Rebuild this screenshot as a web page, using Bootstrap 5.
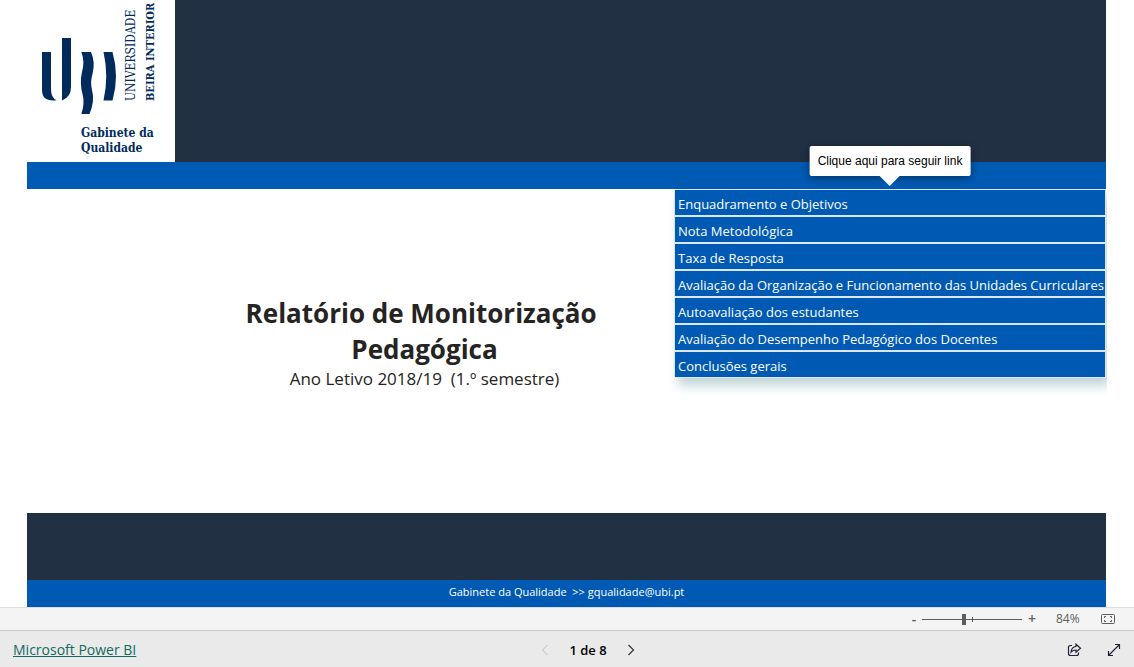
<!DOCTYPE html>
<html lang="pt">
<head>
<meta charset="utf-8">
<meta name="viewport" content="width=device-width, initial-scale=1">
<title>Relatório de Monitorização Pedagógica</title>
<link href="https://cdn.jsdelivr.net/npm/bootstrap@5.3.0/dist/css/bootstrap.min.css" rel="stylesheet">
<style>
  :root { --navy: #223044; --blue: #005ab4; --logo: #002b5c; }
  body { font-family: "Open Sans", "Noto Sans", sans-serif; font-size: 13px; line-height: 20px; color: #252423; }
  .report { padding: 0 28px 0 27px; }
  .navy { background: var(--navy); }
  .blue { background: var(--blue); }
  .band { height: 27px; }
  .masthead { height: 162px; }
  .brand-box { width: 148px; color: var(--logo); font-family: "DejaVu Serif Condensed", "DejaVu Serif", serif; padding: 4px 0 0 15px; }
  .brand-mark { width: 76px; height: 78px; margin-top: 34px; }
  .vertical { writing-mode: vertical-rl; transform: rotate(180deg); font-size: 12px; line-height: 19px; height: 97px; margin-left: 4px; white-space: nowrap; }
  .vertical .fw-bold { font-size: 11px; }
  .brand-unit { font-size: 12px; line-height: 15px; padding-left: 39px; margin-top: 10px; }
  .cover { padding: 106px 0 0 148px; }
  .cover h1 { font-size: 26px; line-height: 36px; font-weight: 700; }
  .cover p { font-size: 17px; line-height: 24px; white-space: pre-wrap; }
  .toc { width: 432px; align-self: flex-start; }
  .toc-list { background: #d9e8f4; border: 1px solid #d9e8f4; gap: 2px; box-shadow: 4px 8px 10px #c3d6d8; clip-path: inset(0 -1px -20px -12px); }
  .toc-list a { background: var(--blue); color: #fff; font-size: 13px; line-height: 25px; padding: 2px 0 0 3px; height: 25px; text-decoration: none; white-space: nowrap; }
  .toc-list a:hover { background: #004f9e; }
  .hint { left: 50%; bottom: 100%; transform: translateX(-50%); margin-bottom: 13px; background: #fff; color: #000; border-radius: 2px; font: 12px/30px "Liberation Sans", Arial, sans-serif; padding: 0 8px; white-space: nowrap; box-shadow: 0 2px 8px rgba(0,0,0,.4); }
  .hint::after { content: ""; position: absolute; top: 100%; left: 50%; margin-left: -10px; border: 10px solid transparent; border-top-color: #fff; border-bottom: 0; }
  .foot-dark { height: 67px; }
  .contact { font-size: 11px; line-height: 24px; white-space: pre; }
  .zoom-bar { height: 24px; background: #f4f4f4; border-top: 1px solid #dedede; border-bottom: 1px solid #c8c8c8; color: #605e5c; padding-right: 18px; }
  .plain { background: none; border: 0; padding: 0; color: inherit; line-height: 16px; display: flex; align-items: center; justify-content: center; }
  .step { width: 10px; font-size: 14px; font-weight: 600; }
  .zoom-range { -webkit-appearance: none; appearance: none; width: 100px; height: 12px; margin: 0 5px 0 3px; background: linear-gradient(#605e5c, #605e5c) 50px 50% / 1px 5px no-repeat, linear-gradient(#605e5c, #605e5c) 0 50% / 100% 1px no-repeat; }
  .zoom-range::-webkit-slider-thumb { -webkit-appearance: none; width: 4px; height: 11px; background: #605e5c; }
  .zoom-range::-moz-range-thumb { width: 4px; height: 11px; border: 0; border-radius: 0; background: #605e5c; }
  .percent { width: 24px; margin: 0 21px 0 19px; font-size: 12px; }
  .pager-bar { height: 36px; background: #eaeaea; padding: 2px 13px 0; display: grid; grid-template-columns: 1fr auto 1fr; align-items: center; }
  .pager-bar a { color: #106a60; font-size: 14px; }
  .pager { margin-left: 42px; }
  .page-no { color: #000; font-size: 13px; font-weight: 600; margin: 0 20px; }
  svg { display: block; }
</style>
</head>
<body class="d-flex flex-column min-vh-100">
<div class="report d-flex flex-column flex-grow-1">
  <header class="masthead d-flex">
    <div class="brand-box">
      <div class="d-flex">
        <svg class="brand-mark" viewBox="0 0 76 78" fill="#002b5c" role="img" aria-label="UBI">
          <path d="M0 14h9v37q0 9 5.500 11.300Q0 64 0 52z"/>
          <path d="M20 0h9v49q0 10-9 13.500z"/>
          <path d="M39.300 14H49Q53.500 24 50.500 36Q48 44 50 52Q53 63 47.500 76H39.300Q43 65 40.500 56Q37.500 45 40 34Q43 23 39.300 14z"/>
          <path d="M61.500 14H70.500Q77.500 38 70.500 62.500H61.500Q67 38 61.500 14z"/>
        </svg>
        <div class="vertical"><div>UNIVERSIDADE</div><div class="fw-bold">BEIRA INTERIOR</div></div>
      </div>
      <div class="brand-unit fw-bold">Gabinete da<br>Qualidade</div>
    </div>
    <div class="navy flex-grow-1"></div>
  </header>
  <div class="blue band"></div>
  <main class="d-flex flex-grow-1">
    <section class="cover flex-grow-1 text-center">
      <h1 class="mb-0">Relatório de Monitorização&nbsp;<br>Pedagógica</h1>
      <p class="m-0">Ano Letivo 2018/19  (1.º semestre)</p>
    </section>
    <div class="toc position-relative">
      <nav class="toc-list d-flex flex-column" aria-label="Índice">
        <a href="#enquadramento">Enquadramento e Objetivos</a>
        <a href="#nota">Nota Metodológica</a>
        <a href="#taxa">Taxa de Resposta</a>
        <a href="#organizacao">Avaliação da Organização e Funcionamento das Unidades Curriculares</a>
        <a href="#autoavaliacao">Autoavaliação dos estudantes</a>
        <a href="#desempenho">Avaliação do Desempenho Pedagógico dos Docentes</a>
        <a href="#conclusoes">Conclusões gerais</a>
      </nav>
      <div class="hint position-absolute" role="tooltip">Clique aqui para seguir link</div>
    </div>
  </main>
  <footer>
    <div class="navy foot-dark"></div>
    <div class="blue band contact text-white text-center">Gabinete da Qualidade  &gt;&gt; gqualidade@ubi.pt</div>
  </footer>
</div>
<div class="zoom-bar d-flex align-items-center justify-content-end">
  <button class="plain step" type="button" aria-label="Reduzir">-</button>
  <input class="zoom-range" type="range" min="0" max="200" value="84" aria-label="Zoom">
  <button class="plain step" type="button" aria-label="Ampliar">+</button>
  <span class="percent">84%</span>
  <button class="plain" type="button" aria-label="Ajustar à página">
    <svg width="15" height="12" viewBox="0 0 15 12" fill="none" stroke="#605e5c"><rect x=".5" y="1.500" width="13" height="9" rx="1"/><path d="M5 3.500H3.500V5M9 3.500h1.500V5M3.500 7v1.500H5M10.500 7v1.500H9"/></svg>
  </button>
</div>
<div class="pager-bar">
  <div><a href="#powerbi">Microsoft Power BI</a></div>
  <div class="pager d-flex align-items-center">
    <button class="plain" type="button" aria-label="Página anterior" disabled><svg width="8" height="12" viewBox="0 0 8 12" fill="none" stroke="#bdbdbd"><path d="M6.500 1l-5 5 5 5"/></svg></button>
    <span class="page-no">1 de 8</span>
    <button class="plain" type="button" aria-label="Página seguinte"><svg width="8" height="12" viewBox="0 0 8 12" fill="none" stroke="#333" stroke-width="1.200"><path d="M1.500 1l5 5-5 5"/></svg></button>
  </div>
  <div class="d-flex justify-content-end align-items-center gap-4">
    <button class="plain" type="button" aria-label="Partilhar"><svg width="16" height="14" viewBox="0 0 16 14" fill="none" stroke="#252033" stroke-width="1.200"><path d="M5 2.500H3.500Q1.500 2.500 1.500 4.500v6q0 2 2 2h6q2 0 2-2V9.500M9 1.200l4.500 4-4.500 4V7Q6 7 4 9.200 4.500 4 9 3.500z"/></svg></button>
    <button class="plain" type="button" aria-label="Ecrã inteiro"><svg width="14" height="14" viewBox="0 0 14 14" fill="none" stroke="#252033" stroke-width="1.200"><path d="M1.500 12.500l11-11M8 1.500h4.500V6M1.500 8v4.500H6"/></svg></button>
  </div>
</div>
<script src="https://cdn.jsdelivr.net/npm/bootstrap@5.3.0/dist/js/bootstrap.bundle.min.js"></script>
</body>
</html>
